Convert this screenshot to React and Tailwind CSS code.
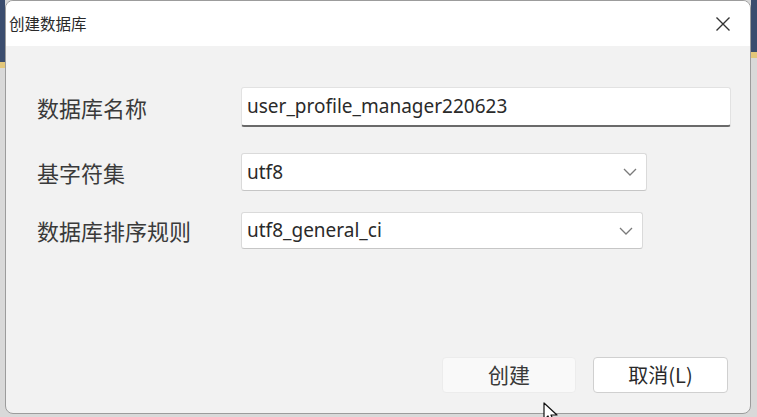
import React from "react";

const cjk = { fontFamily: '"Noto Sans CJK SC", "Noto Sans", sans-serif' };
const latin = { fontFamily: '"Noto Sans", "Noto Sans CJK SC", sans-serif' };

function Chevron() {
  return (
    <svg width="14" height="8" viewBox="0 0 14 8" fill="none">
      <path d="M1 1l6 6 6-6" stroke="#7a7a7a" strokeWidth="1.3" />
    </svg>
  );
}

function Strip({ top }) {
  return (
    <div className="flex flex-col w-full h-full">
      <div className="bg-[#3b4d6e]" style={{ height: top }} />
      <div className="h-[6px] bg-[#e3c77a]" />
      <div className="flex-1 bg-[#d9d9d9]" />
    </div>
  );
}

export default function App() {
  return (
    <div className="relative w-[757px] h-[417px] flex bg-[#d9d9d9] overflow-hidden" style={cjk}>
      <div className="w-[5px] shrink-0">
        <Strip top={62} />
      </div>

      {/* dialog */}
      <div className="flex-1 h-[414px] flex flex-col bg-[#f2f2f2] border border-[#9c9c9c] rounded-[8px] overflow-hidden">
        <div className="h-[45px] shrink-0 bg-white flex items-center justify-between pl-[3px] pr-[19px]">
          <span className="text-[15.5px] text-[#2a2a2a]">创建数据库</span>
          <svg width="16" height="16" viewBox="0 0 16 16">
            <path d="M1.5 1.5l13 13M14.5 1.5l-13 13" stroke="#333" strokeWidth="1.4" />
          </svg>
        </div>

        <div className="flex-1 flex flex-col pl-[31px] pt-[41px]">
          <div className="flex items-center h-[40px]">
            <span className="w-[204px] text-[22px] text-[#3a3a3a]">数据库名称</span>
            <div className="w-[490px] h-[40px] bg-white rounded-[3px] border border-[#e2e2e2] border-b-[2px] border-b-[#6a6a6a] flex items-center px-[5px]">
              <span className="text-[19px] text-[#2a2a2a]" style={latin}>user_profile_manager220623</span>
            </div>
          </div>

          <div className="flex items-center h-[38px] mt-[26px]">
            <span className="w-[204px] text-[22px] text-[#3a3a3a]">基字符集</span>
            <div className="w-[406px] h-[38px] bg-white rounded-[3px] border border-[#dadada] border-b-[#c6c6c6] flex items-center justify-between pl-[5px] pr-[9px]">
              <span className="text-[19px] text-[#2a2a2a]" style={latin}>utf8</span>
              <Chevron />
            </div>
          </div>

          <div className="flex items-center h-[37px] mt-[21px]">
            <span className="w-[204px] text-[22px] text-[#3a3a3a]">数据库排序规则</span>
            <div className="w-[402px] h-[37px] bg-white rounded-[3px] border border-[#dadada] border-b-[#c6c6c6] flex items-center justify-between pl-[5px] pr-[9px]">
              <span className="text-[19px] text-[#2a2a2a]" style={latin}>utf8_general_ci</span>
              <Chevron />
            </div>
          </div>

          <div className="mt-auto flex justify-end gap-[17px] pr-[22px] pb-[20px]">
            <button className="w-[134px] h-[36px] rounded-[4px] bg-[#f9f9f9] border border-[#ececec] text-[21px] text-[#3a3a3a]">
              创建
            </button>
            <button className="w-[135px] h-[36px] rounded-[4px] bg-white border border-[#d0d0d0] text-[20px] text-[#2a2a2a]">
              取消(L)
            </button>
          </div>
        </div>
      </div>

      <div className="w-[6px] shrink-0">
        <Strip top={52} />
      </div>

      {/* mouse cursor */}
      <svg className="absolute left-[543px] top-[402px]" width="16" height="22" viewBox="0 0 16 22">
        <path d="M1 1v17l4-4 3 7 3-1.3-3-6.7h6z" fill="white" stroke="#111" strokeWidth="1.2" strokeLinejoin="round" />
      </svg>
    </div>
  );
}
